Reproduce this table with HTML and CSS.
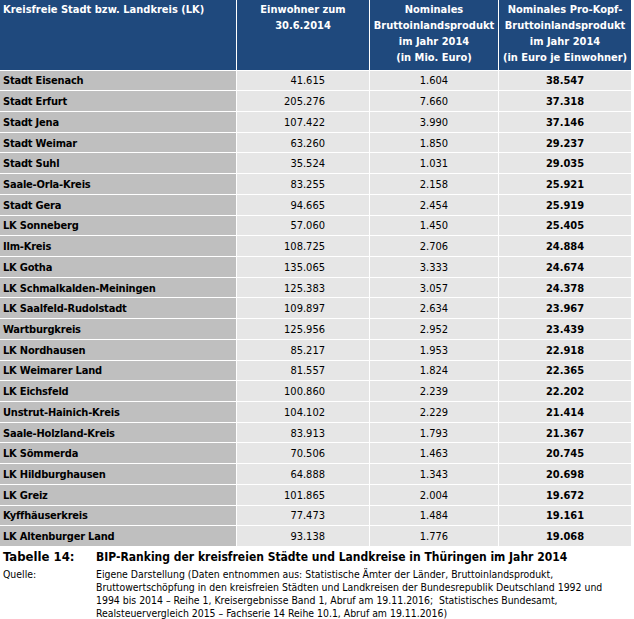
FILE: index.html
```html
<!DOCTYPE html>
<html lang="de">
<head>
<meta charset="utf-8">
<title>BIP-Ranking Thüringen 2014</title>
<link rel="stylesheet" href="styles.css">
</head>
<body>
<div class="table">
  <div class="th th-left">Kreisfreie Stadt bzw. Landkreis (LK)</div>
  <div class="th">Einwohner zum<br>30.6.2014</div>
  <div class="th">Nominales<br>Bruttoinlandsprodukt<br>im Jahr 2014<br>(in Mio. Euro)</div>
  <div class="th">Nominales Pro-Kopf-<br>Bruttoinlandsprodukt<br>im Jahr 2014<br>(in Euro je Einwohner)</div>

  <div class="name">Stadt Eisenach</div><div class="pop">41.615</div><div class="bip">1.604</div><div class="pk">38.547</div>
  <div class="name">Stadt Erfurt</div><div class="pop">205.276</div><div class="bip">7.660</div><div class="pk">37.318</div>
  <div class="name">Stadt Jena</div><div class="pop">107.422</div><div class="bip">3.990</div><div class="pk">37.146</div>
  <div class="name">Stadt Weimar</div><div class="pop">63.260</div><div class="bip">1.850</div><div class="pk">29.237</div>
  <div class="name">Stadt Suhl</div><div class="pop">35.524</div><div class="bip">1.031</div><div class="pk">29.035</div>
  <div class="name">Saale-Orla-Kreis</div><div class="pop">83.255</div><div class="bip">2.158</div><div class="pk">25.921</div>
  <div class="name">Stadt Gera</div><div class="pop">94.665</div><div class="bip">2.454</div><div class="pk">25.919</div>
  <div class="name">LK Sonneberg</div><div class="pop">57.060</div><div class="bip">1.450</div><div class="pk">25.405</div>
  <div class="name">Ilm-Kreis</div><div class="pop">108.725</div><div class="bip">2.706</div><div class="pk">24.884</div>
  <div class="name">LK Gotha</div><div class="pop">135.065</div><div class="bip">3.333</div><div class="pk">24.674</div>
  <div class="name">LK Schmalkalden-Meiningen</div><div class="pop">125.383</div><div class="bip">3.057</div><div class="pk">24.378</div>
  <div class="name">LK Saalfeld-Rudolstadt</div><div class="pop">109.897</div><div class="bip">2.634</div><div class="pk">23.967</div>
  <div class="name">Wartburgkreis</div><div class="pop">125.956</div><div class="bip">2.952</div><div class="pk">23.439</div>
  <div class="name">LK Nordhausen</div><div class="pop">85.217</div><div class="bip">1.953</div><div class="pk">22.918</div>
  <div class="name">LK Weimarer Land</div><div class="pop">81.557</div><div class="bip">1.824</div><div class="pk">22.365</div>
  <div class="name">LK Eichsfeld</div><div class="pop">100.860</div><div class="bip">2.239</div><div class="pk">22.202</div>
  <div class="name">Unstrut-Hainich-Kreis</div><div class="pop">104.102</div><div class="bip">2.229</div><div class="pk">21.414</div>
  <div class="name">Saale-Holzland-Kreis</div><div class="pop">83.913</div><div class="bip">1.793</div><div class="pk">21.367</div>
  <div class="name">LK Sömmerda</div><div class="pop">70.506</div><div class="bip">1.463</div><div class="pk">20.745</div>
  <div class="name">LK Hildburghausen</div><div class="pop">64.888</div><div class="bip">1.343</div><div class="pk">20.698</div>
  <div class="name">LK Greiz</div><div class="pop">101.865</div><div class="bip">2.004</div><div class="pk">19.672</div>
  <div class="name">Kyffhäuserkreis</div><div class="pop">77.473</div><div class="bip">1.484</div><div class="pk">19.161</div>
  <div class="name">LK Altenburger Land</div><div class="pop">93.138</div><div class="bip">1.776</div><div class="pk">19.068</div>
</div>

<div class="caption">
  <div class="cap-label">Tabelle 14:</div>
  <div class="cap-title">BIP-Ranking der kreisfreien Städte und Landkreise in Thüringen im Jahr 2014</div>
</div>
<div class="source">
  <div class="src-label">Quelle:</div>
  <div class="src-text">Eigene Darstellung (Daten entnommen aus: Statistische Ämter der Länder, Bruttoinlandsprodukt,<br>Bruttowertschöpfung in den kreisfreien Städten und Landkreisen der Bundesrepublik Deutschland 1992 und<br>1994 bis 2014 – Reihe 1, Kreisergebnisse Band 1, Abruf am 19.11.2016;&nbsp; Statistisches Bundesamt,<br>Realsteuervergleich 2015 – Fachserie 14 Reihe 10.1, Abruf am 19.11.2016)</div>
</div>
</body>
</html>
```

FILE: styles.css
```css
html, body {
  margin: 0;
  padding: 0;
  background: #ffffff;
}

body {
  font-family: "DejaVu Sans Condensed", "DejaVu Sans", sans-serif;
  font-stretch: condensed;
  color: #000000;
  width: 634px;
}

.table {
  display: grid;
  grid-template-columns: 236px 132px 128px 132px;
  grid-template-rows: 69.5px;
  grid-auto-rows: 19.72px;
  gap: 1px;
  background: #ffffff;
  width: 631px;
  font-size: 11px;
}

.th {
  background: #1f497d;
  color: #ffffff;
  font-weight: bold;
  text-align: center;
  line-height: 15.9px;
  padding-top: 2px;
  white-space: nowrap;
}

.th-left {
  text-align: left;
  padding-left: 3px;
}

.name,
.pop,
.bip,
.pk {
  display: flex;
  align-items: center;
  white-space: nowrap;
  line-height: 1;
  padding-top: 1px;
}

.name {
  background: #bfbfbf;
  font-weight: bold;
  padding-left: 3px;
  letter-spacing: -0.2px;
}

.pop {
  background: #e6e6e6;
  justify-content: flex-end;
  padding-right: 44px;
}

.bip {
  background: #e6e6e6;
  justify-content: center;
}

.pk {
  background: #e6e6e6;
  justify-content: center;
  font-weight: bold;
}

.caption {
  display: flex;
  margin-top: 3px;
  font-weight: bold;
  font-size: 12px;
  line-height: 16px;
}

.cap-label {
  width: 93px;
  padding-left: 3px;
  font-size: 13px;
}

.source {
  display: flex;
  font-size: 10.4px;
  line-height: 13px;
  margin-top: 3px;
}

.src-label {
  width: 93px;
  padding-left: 3px;
}

.src-text {
  white-space: nowrap;
}
```
